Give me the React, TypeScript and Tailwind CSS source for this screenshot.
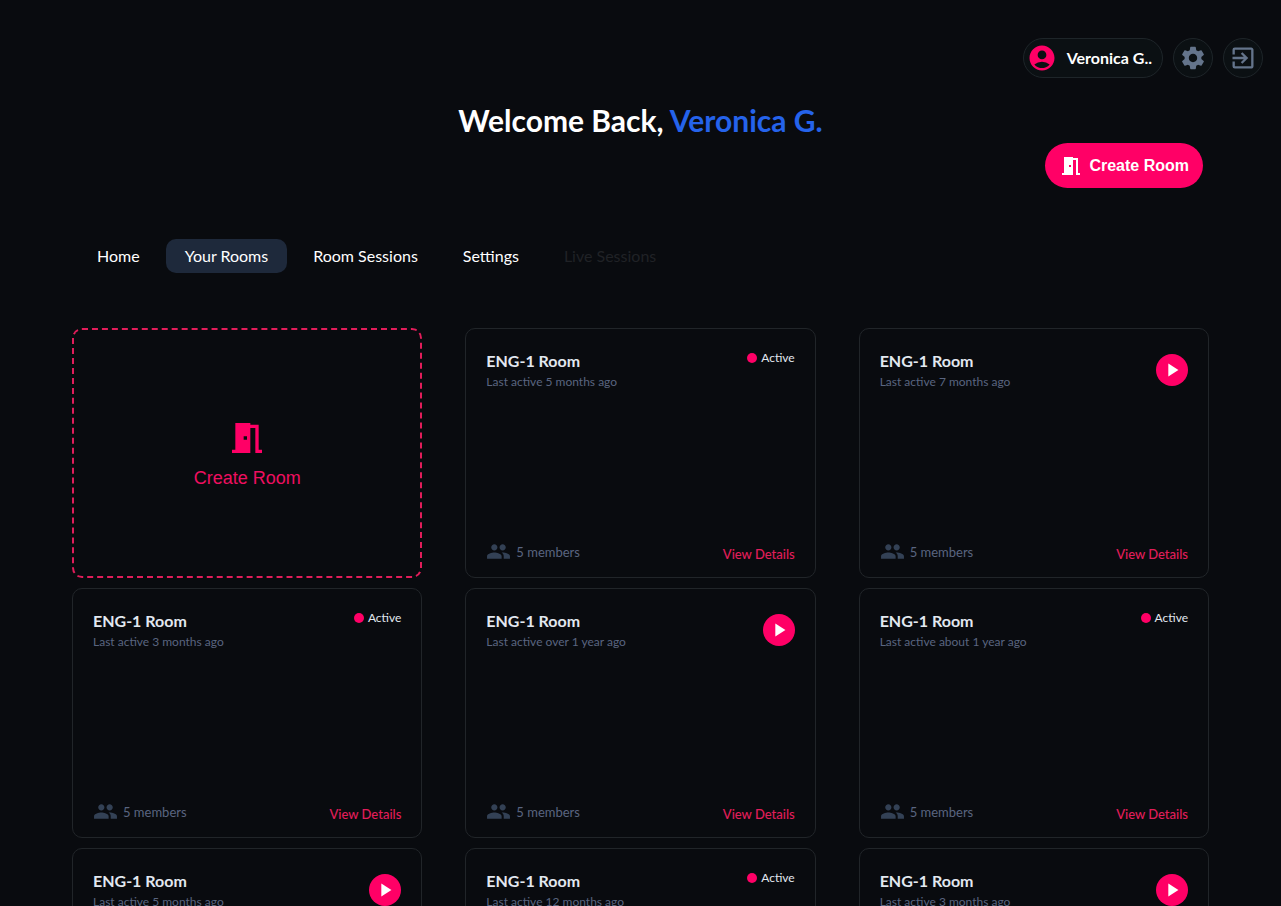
import {
  MdAccountCircle,
  MdExitToApp,
  MdMeetingRoom,
  MdPeople,
  MdPlayArrow,
  MdSettings,
} from "react-icons/md";

type Room = { id: number; name: string; lastActive: string; members: number; active: boolean };

const rooms: Room[] = [
  { id: 1, name: "ENG-1 Room", lastActive: "5 months ago", members: 5, active: true },
  { id: 2, name: "ENG-1 Room", lastActive: "7 months ago", members: 5, active: false },
  { id: 3, name: "ENG-1 Room", lastActive: "3 months ago", members: 5, active: true },
  { id: 4, name: "ENG-1 Room", lastActive: "over 1 year ago", members: 5, active: false },
  { id: 5, name: "ENG-1 Room", lastActive: "about 1 year ago", members: 5, active: true },
  { id: 6, name: "ENG-1 Room", lastActive: "5 months ago", members: 5, active: false },
  { id: 7, name: "ENG-1 Room", lastActive: "12 months ago", members: 5, active: true },
  { id: 8, name: "ENG-1 Room", lastActive: "3 months ago", members: 5, active: false },
];

const tabs = [
  { label: "Home", style: "text-white" },
  { label: "Your Rooms", style: "bg-[#1e293b] text-white" },
  { label: "Room Sessions", style: "text-white" },
  { label: "Settings", style: "text-white" },
  { label: "Live Sessions", style: "text-[#202226]", disabled: true },
];

function TopBar() {
  return (
    <header className="flex justify-end gap-2.5 px-[18px] pt-[38px]">
      <button className="flex h-10 items-center gap-2.5 rounded-full border border-[#1e2529] bg-[#0b1013] pr-2.5 pl-[3px] text-base font-bold text-white">
        <MdAccountCircle size={30} className="text-[#ff0066]" aria-hidden />
        Veronica G..
      </button>
      <button
        aria-label="Settings"
        className="flex size-10 items-center justify-center rounded-full border border-[#1e2529] bg-[#0b1013] text-[#64748b]"
      >
        <MdSettings size={28} />
      </button>
      <button
        aria-label="Log out"
        className="flex size-10 items-center justify-center rounded-full border border-[#1e2529] bg-[#0b1013] text-[#64748b]"
      >
        <MdExitToApp size={28} />
      </button>
    </header>
  );
}

function RoomCard({ room }: { room: Room }) {
  return (
    <article className="flex h-[250px] flex-col justify-between rounded-[10px] border border-[#212529] px-5 pt-[22px] pb-[11px]">
      <div className="flex items-start justify-between">
        <div>
          <h2 className="text-base leading-5 font-bold text-slate-200">{room.name}</h2>
          <p className="text-xs leading-[22px] text-[#5a6580]">Last active {room.lastActive}</p>
        </div>
        {room.active ? (
          <span className="flex items-center gap-1 text-xs leading-[14px] text-slate-200">
            <span className="size-2.5 rounded-full bg-[#ff0066]" />
            Active
          </span>
        ) : (
          <button
            aria-label="Start room"
            className="mt-[3px] flex size-8 items-center justify-center rounded-full bg-[#ff0066] text-white"
          >
            <MdPlayArrow size={22} />
          </button>
        )}
      </div>
      <div className="flex items-center justify-between">
        <span className="flex items-center gap-[5px] pb-0.5 text-[13px] leading-6 text-[#5a6580]">
          <MdPeople size={25} className="text-[#334155]" aria-hidden />
          {room.members} members
        </span>
        <a href="#details" className="pt-1 text-[13px] font-medium text-[#e11d5a]">
          View Details
        </a>
      </div>
    </article>
  );
}

export default function App() {
  return (
    <div className="min-h-screen bg-[#090b0f] pb-10 font-['Lato','Noto_Sans',sans-serif]">
      <TopBar />
      <main className="px-[72px]">
        <h1 className="pt-6 text-center text-3xl leading-9 font-bold text-white">
          Welcome Back, <span className="text-[#2563eb]">Veronica G.</span>
        </h1>
        <div className="mt-[5px] flex justify-end pr-1.5">
          <button className="flex h-[45px] items-center gap-1.5 rounded-full bg-[#ff0066] px-3.5 font-['Liberation_Sans',sans-serif] text-base font-bold text-white">
            <MdMeetingRoom size={24} aria-hidden />
            Create Room
          </button>
        </div>
        <nav className="mt-[51px] flex gap-[7px] pl-1.5">
          {tabs.map((tab) => (
            <button
              key={tab.label}
              disabled={tab.disabled}
              className={`h-[34px] rounded-[10px] px-[19px] text-base ${tab.style}`}
            >
              {tab.label}
            </button>
          ))}
        </nav>
        <section className="mt-[55px] grid grid-cols-3 gap-x-[43px] gap-y-2.5">
          <button className="flex h-[250px] flex-col items-center justify-center gap-1.5 rounded-[10px] border-2 border-dashed border-[#e11d5a] pt-1 font-['Liberation_Sans',sans-serif] text-lg text-[#ef0f60]">
            <MdMeetingRoom size={40} className="text-[#ff0066]" aria-hidden />
            Create Room
          </button>
          {rooms.map((room) => (
            <RoomCard key={room.id} room={room} />
          ))}
        </section>
      </main>
    </div>
  );
}
